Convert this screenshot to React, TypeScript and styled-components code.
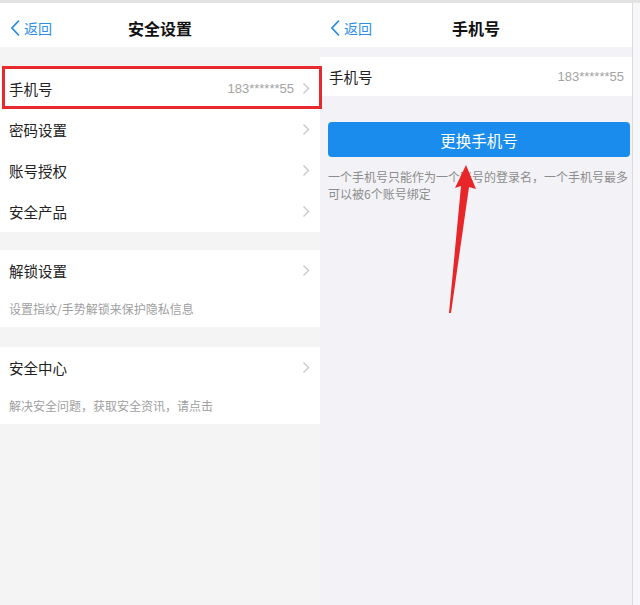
import React from "react";
import styled, { createGlobalStyle } from "styled-components";

const Global = createGlobalStyle`
  html, body { margin: 0; padding: 0; background: #ffffff; }
  body { font-family: "Noto Sans CJK SC", "Noto Sans", sans-serif; }
  * { box-sizing: border-box; }
`;

const Screen = styled.div`
  position: relative;
  width: 640px;
  height: 605px;
  display: flex;
  border-top: 3px solid #e2e2e2;
  overflow: hidden;
`;

const Panel = styled.div<{ $bg: string }>`
  width: 320px;
  display: flex;
  flex-direction: column;
  background: ${(p) => p.$bg};
`;

const RightPanel = styled(Panel)`
  width: 313px;
  border-right: 1px solid #dcdce0;
`;

const Edge = styled.div`
  flex: 1;
  background: #f7f7f9;
`;

const Header = styled.div`
  height: 44px;
  background: #ffffff;
  display: grid;
  grid-template-columns: 1fr auto 1fr;
  align-items: center;
  padding: 6px 10px 0 10px;
`;

const Back = styled.div`
  display: flex;
  align-items: center;
  gap: 3px;
  color: #2d8ee8;
  font-size: 14px;
`;

const Title = styled.div`
  font-size: 16px;
  font-weight: 700;
  color: #111;
`;

const Gap = styled.div<{ $h: number }>`
  height: ${(p) => p.$h}px;
  flex: none;
`;

const Group = styled.div`
  background: #ffffff;
  display: flex;
  flex-direction: column;
`;

const Row = styled.div<{ $h?: number; $pr?: number }>`
  height: ${(p) => p.$h ?? 41}px;
  display: flex;
  align-items: center;
  padding: 0 ${(p) => p.$pr ?? 10}px 0 9px;
  gap: 8px;
`;

const Label = styled.div`
  flex: 1;
  font-size: 14.5px;
  color: #222;
`;

const Value = styled.div`
  font-size: 13px;
  color: #a3a3a3;
  font-family: "Liberation Sans", "Noto Sans", sans-serif;
`;

const Hint = styled.div`
  height: 36px;
  display: flex;
  align-items: center;
  padding: 0 9px 1px;
  font-size: 12px;
  color: #a0a0a0;
`;

const Button = styled.div`
  margin: 0 2px 0 8px;
  height: 35px;
  border-radius: 4px;
  background: #1a8cee;
  color: #fff;
  font-size: 15.5px;
  display: flex;
  align-items: center;
  justify-content: center;
`;

const Note = styled.div`
  padding: 11px 0 0 8px;
  font-size: 12px;
  line-height: 17px;
  color: #8c8c8c;
  white-space: nowrap;
`;

const RedBox = styled.div`
  position: absolute;
  left: 2px;
  top: 63px;
  width: 320px;
  height: 43px;
  border: 3.5px solid #e82a2e;
`;

const ArrowSvg = styled.svg`
  position: absolute;
  left: 0;
  top: 0;
  pointer-events: none;
`;

const Chevron = () => (
  <svg width="8" height="13" viewBox="0 0 8 13">
    <path d="M1.5 1.5 L6.5 6.5 L1.5 11.5" fill="none" stroke="#c8c8cc" strokeWidth="1.4" />
  </svg>
);

const BackIcon = () => (
  <svg width="11" height="18" viewBox="0 0 11 18">
    <path d="M9 1.5 L2 9 L9 16.5" fill="none" stroke="#2d8ee8" strokeWidth="1.8" />
  </svg>
);

const NavHeader = ({ title }: { title: string }) => (
  <Header>
    <Back>
      <BackIcon />
      返回
    </Back>
    <Title>{title}</Title>
    <span />
  </Header>
);

export default function App() {
  return (
    <>
      <Global />
      <Screen>
        <Panel $bg="#f4f4f4">
          <NavHeader title="安全设置" />
          <Gap $h={21} />
          <Group>
            <Row>
              <Label>手机号</Label>
              <Value>183******55</Value>
              <Chevron />
            </Row>
            <Row>
              <Label>密码设置</Label>
              <Chevron />
            </Row>
            <Row>
              <Label>账号授权</Label>
              <Chevron />
            </Row>
            <Row>
              <Label>安全产品</Label>
              <Chevron />
            </Row>
          </Group>
          <Gap $h={18} />
          <Group>
            <Row>
              <Label>解锁设置</Label>
              <Chevron />
            </Row>
            <Hint>设置指纹/手势解锁来保护隐私信息</Hint>
          </Group>
          <Gap $h={20} />
          <Group>
            <Row>
              <Label>安全中心</Label>
              <Chevron />
            </Row>
            <Hint>解决安全问题，获取安全资讯，请点击</Hint>
          </Group>
        </Panel>
        <RightPanel $bg="#f3f3f7">
          <NavHeader title="手机号" />
          <Gap $h={10} />
          <Group>
            <Row $h={39} $pr={8}>
              <Label>手机号</Label>
              <Value>183******55</Value>
            </Row>
          </Group>
          <Gap $h={26} />
          <Button>更换手机号</Button>
          <Note>
            一个手机号只能作为一个账号的登录名，一个手机号最多
            <br />
            可以被6个账号绑定
          </Note>
        </RightPanel>
        <Edge />
        <RedBox />
        <ArrowSvg width="640" height="605" viewBox="0 0 640 605">
          <polygon
            points="466,162 476,186 469,184 451,310 449,310 461,183 455,185"
            fill="#e8262a"
          />
        </ArrowSvg>
      </Screen>
    </>
  );
}
